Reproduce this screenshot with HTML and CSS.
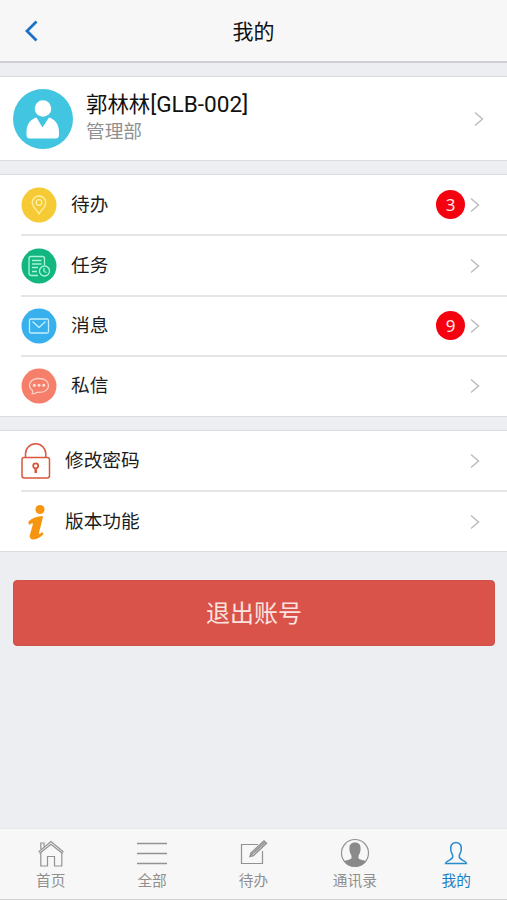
FILE: index.html
```html
<!DOCTYPE html>
<html lang="zh-CN">
<head>
    <meta charset="UTF-8">
    <meta name="viewport" content="width=device-width, initial-scale=1.0">
    <title>我的</title>
    <link rel="stylesheet" href="styles.css">
</head>
<body>
    <div class="page">
        <header class="header">
            <a class="back">
                <svg width="14" height="22" viewBox="0 0 14 22"><path d="M12.500 1.500 L3 11 L12.500 20.500"/></svg>
            </a>
            <h1 class="header-title">我的</h1>
        </header>

        <main class="content">
            <section class="group profile">
                <svg class="avatar" viewBox="0 0 60 60">
                    <circle cx="30" cy="30" r="30" fill="#42c5e1"/>
                    <circle cx="30" cy="19.5" r="8.3" fill="#fff"/>
                    <path d="M23.500 28.500 L29.500 38.500 L36 28.500 C42 30.500 46 35 46 43 V46 Q46 49.500 42.500 49.500 H17 Q13.500 49.500 13.500 46 V43 C13.500 35 17.500 30.500 23.500 28.500 Z" fill="#fff"/>
                </svg>
                <div class="profile-info">
                    <div class="profile-name">郭林林<span class="profile-code">[GLB-002]</span></div>
                    <div class="profile-dept">管理部</div>
                </div>
                <svg class="arrow" viewBox="0 0 10 16"><path d="M1 1.500 L8.500 8 L1 14.500"/></svg>
            </section>

            <section class="group">
                <div class="row">
                    <svg class="row-icon" viewBox="0 0 36 36">
                        <circle cx="18" cy="18" r="17.500" fill="#f5ca35"/>
                        <g class="line pin">
                            <path d="M18 27 C16 23 11.200 20 11.200 15.800 A6.800 6.800 0 0 1 24.800 15.800 C24.800 20 20 23 18 27 Z"/>
                            <circle cx="18" cy="15.500" r="2.800"/>
                        </g>
                    </svg>
                    <span class="row-label">待办</span>
                    <span class="badge">3</span>
                    <svg class="arrow" viewBox="0 0 10 16"><path d="M1 1.500 L8.500 8 L1 14.500"/></svg>
                </div>
                <div class="row">
                    <svg class="row-icon" viewBox="0 0 36 36">
                        <circle cx="18" cy="18" r="17.500" fill="#12b681"/>
                        <g class="line task">
                            <path d="M17 27.500 H10.500 Q8 27.500 8 25 V10.500 Q8 8.500 10 8.500 H21.500 Q23.500 8.500 23.500 10.500 V17"/>
                            <path d="M11 12.500 H20.500 M11 16 H20.500 M11 19.500 H17 M11 23.500 H16"/>
                            <circle cx="23.500" cy="23" r="5"/>
                            <path d="M23 20 V23.500 L25.500 24.500"/>
                        </g>
                    </svg>
                    <span class="row-label">任务</span>
                    <svg class="arrow" viewBox="0 0 10 16"><path d="M1 1.500 L8.500 8 L1 14.500"/></svg>
                </div>
                <div class="row">
                    <svg class="row-icon" viewBox="0 0 36 36">
                        <circle cx="18" cy="18" r="17.500" fill="#38b0ed"/>
                        <g class="line mail">
                            <rect x="8.500" y="11" width="19" height="14" rx="1.500"/>
                            <path d="M11.500 13.500 L18 19.500 L24.500 13.500"/>
                        </g>
                    </svg>
                    <span class="row-label">消息</span>
                    <span class="badge">9</span>
                    <svg class="arrow" viewBox="0 0 10 16"><path d="M1 1.500 L8.500 8 L1 14.500"/></svg>
                </div>
                <div class="row">
                    <svg class="row-icon" viewBox="0 0 36 36">
                        <circle cx="18" cy="18" r="17.500" fill="#f57f6b"/>
                        <g class="line chat">
                            <path d="M11.500 22.500 C6 18.500 8.500 10.500 18 10.500 C24 10.500 27.500 13.500 27.500 17.300 C27.500 22.500 22 25 16.500 24.200 Q14.500 25.800 11 25.800 Q12.300 24.500 11.500 22.500 Z"/>
                        </g>
                        <g fill="#ffe3da">
                            <circle cx="13.300" cy="17.300" r="1.500"/>
                            <circle cx="18" cy="17.300" r="1.500"/>
                            <circle cx="22.700" cy="17.300" r="1.500"/>
                        </g>
                    </svg>
                    <span class="row-label">私信</span>
                    <svg class="arrow" viewBox="0 0 10 16"><path d="M1 1.500 L8.500 8 L1 14.500"/></svg>
                </div>
            </section>

            <section class="group">
                <div class="row">
                    <svg class="tool-icon" viewBox="0 0 30 36" fill="none" stroke="#d9573c" stroke-width="1.500">
                        <rect x="1" y="14.500" width="27.500" height="20.500" rx="2.200"/>
                        <path d="M4.500 14.500 V11 A10 10 0 0 1 24.800 11 V14.500"/>
                        <circle cx="14.700" cy="22.800" r="2.500" stroke-width="1.800"/>
                        <path d="M14.700 25.500 V30" stroke-width="2.500"/>
                    </svg>
                    <span class="row-label">修改密码</span>
                    <svg class="arrow" viewBox="0 0 10 16"><path d="M1 1.500 L8.500 8 L1 14.500"/></svg>
                </div>
                <div class="row">
                    <svg class="tool-icon" viewBox="0 0 30 36" fill="#f79510">
                        <circle cx="19" cy="5.500" r="4.600"/>
                        <path d="M7.200 18 C11 14 16 12.300 22.200 12.300 L18 28.800 C17.600 30.500 18.800 30.200 21.300 28 L22.500 30 C19.500 33.500 15.500 35.700 12 35.500 C9 35.300 8.300 33 9 30.500 L11.800 20.500 C12.200 18.800 11 19 8.300 21 Z"/>
                    </svg>
                    <span class="row-label">版本功能</span>
                    <svg class="arrow" viewBox="0 0 10 16"><path d="M1 1.500 L8.500 8 L1 14.500"/></svg>
                </div>
            </section>

            <button class="logout">退出账号</button>
        </main>

        <nav class="tabbar">
            <a class="tab">
                <svg class="tab-icon" viewBox="0 0 30 30">
                    <path d="M2.500 14 L15 3.500 L27.500 14 M4.800 14 V28 H11.500 V18.500 H18.500 V28 H25.800 V14"/>
                    <path d="M4.800 11 V5 H8 V8.500 M3.500 15.500 L15 6.200 L26.500 15.500"/>
                </svg>
                <span>首页</span>
            </a>
            <a class="tab">
                <svg class="tab-icon" viewBox="0 0 30 30">
                    <path class="bars" d="M0 5.500 H30 M0 15.500 H30 M0 25.500 H30"/>
                </svg>
                <span>全部</span>
            </a>
            <a class="tab">
                <svg class="tab-icon" viewBox="0 0 30 30">
                    <path d="M20 6.500 H3.500 V25.500 H24.500 V13"/>
                    <path d="M12 18.500 L13 15 L26 3 L28.500 5.200 L15.500 17.500 Z M13.500 16.800 L27 4.200" stroke-width="1.400"/>
                </svg>
                <span>待办</span>
            </a>
            <a class="tab">
                <svg class="tab-icon" viewBox="0 0 30 30">
                    <circle cx="15" cy="15" r="13.500"/>
                    <path d="M15 4.500 C19.500 4.500 21 7.500 20.500 12 C20.300 15 19 16.500 18.500 18 V20 C19.500 22 24 22 26 23.500 A14 14 0 0 1 4 23.500 C6 22 10.500 22 11.500 20 V18 C11 16.500 9.700 15 9.500 12 C9 7.500 10.500 4.500 15 4.500 Z" fill="#8a8a8a" stroke="none"/>
                </svg>
                <span>通讯录</span>
            </a>
            <a class="tab active">
                <svg class="tab-icon" viewBox="0 0 30 30">
                    <path d="M15 4.500 C19.500 4.500 20.700 8 20.200 12 C19.900 15 18.200 16 18.200 18.500 C18.200 22.500 25 22 25.500 25.500 H4.500 C5 22 11.800 22.500 11.800 18.500 C11.800 16 10.100 15 9.800 12 C9.300 8 10.500 4.500 15 4.500 Z"/>
                </svg>
                <span>我的</span>
            </a>
        </nav>
    </div>
</body>
</html>
```
FILE: styles.css
```css
* {
    margin: 0;
    padding: 0;
    box-sizing: border-box;
}

body {
    font-family: Roboto, "Noto Sans CJK SC", sans-serif;
    color: #1c1c1c;
    background: #eceef2;
}

svg {
    display: block;
    flex-shrink: 0;
}

.page {
    height: 900px;
    display: flex;
    flex-direction: column;
    overflow: hidden;
}

/* 顶部导航 */
.header {
    height: 63px;
    display: grid;
    grid-template-columns: 60px 1fr 60px;
    align-items: center;
    background: #f7f7f7;
    border-bottom: 2px solid #cdcfd0;
}

.back {
    padding: 1px 0 0 24px;
}

.back path {
    fill: none;
    stroke: #1a6fc9;
    stroke-width: 2.8;
}

.header-title {
    padding-bottom: 2px;
    font-size: 21px;
    font-weight: 400;
    text-align: center;
    color: #111;
}

.content {
    flex: 1;
    padding-top: 12.5px;
}

.group {
    background: #fff;
    border-top: 1px solid #d9dbde;
    border-bottom: 1px solid #d9dbde;
    margin-bottom: 13.5px;
}

.profile {
    height: 85px;
    display: flex;
    align-items: center;
    padding: 1px 23px 0 13px;
}

.avatar {
    width: 60px;
    height: 60px;
}

.profile-info {
    flex: 1;
    margin-left: 13px;
}

.profile-name {
    font-size: 21.4px;
    line-height: 28px;
    color: #111;
}

.profile-code {
    font-size: 22.6px;
    line-height: 1;
}

.profile-dept {
    font-size: 18.7px;
    line-height: 27px;
    color: #909090;
}

.arrow {
    width: 10px;
    height: 16px;
}

.arrow path {
    fill: none;
    stroke: #bdbdbd;
    stroke-width: 1.5;
}

/* 列表 */
.row {
    height: 60.4px;
    display: flex;
    align-items: center;
    margin-left: 21px;
    padding-right: 27px;
}

.row:first-child {
    height: 59.4px;
}

.row + .row {
    border-top: 2px solid #e5e5e7;
}

.row-icon {
    width: 36px;
    height: 36px;
}

.row-label {
    flex: 1;
    margin-left: 14px;
    font-size: 18.7px;
    line-height: 28px;
}

.tool-icon {
    width: 30px;
    height: 36px;
}

.line {
    fill: none;
    stroke-width: 1.3;
    stroke-linejoin: round;
}

.pin { stroke: #fff0a8; }
.task { stroke: #a8f5d6; }
.mail { stroke: #c4f0ff; }
.chat { stroke: #ffd0c2; }

.badge {
    width: 29px;
    height: 29px;
    margin-right: 5px;
    border-radius: 50%;
    background: #f5000f;
    color: #ffe9e9;
    font-family: "Noto Sans", sans-serif;
    font-size: 17px;
    line-height: 29px;
    text-align: center;
}

.logout {
    display: block;
    width: 482px;
    height: 66px;
    margin: 28px auto 0 13px;
    padding-bottom: 3px;
    border: 1px solid #d0504a;
    border-radius: 4px;
    background: #da534a;
    color: #fbe3df;
    font-family: inherit;
    font-size: 24px;
}

/* 底部标签栏 */
.tabbar {
    height: 72px;
    display: grid;
    grid-template-columns: repeat(5, 1fr);
    background: #f7f7f7;
    border-top: 1px solid #e7e9ea;
    border-bottom: 1px solid #d0d0d0;
}

.tab {
    display: flex;
    flex-direction: column;
    align-items: center;
    padding-top: 9px;
    font-size: 14.7px;
    line-height: 22px;
    color: #8f8f8f;
}

.tab-icon {
    width: 30px;
    height: 30px;
    margin-bottom: 2px;
    fill: none;
    stroke: #929292;
    stroke-width: 1.2;
}

.tab-icon .bars {
    stroke-width: 1.7;
}

.tab.active {
    color: #1c7fc4;
}

.tab.active .tab-icon {
    stroke: #2a8cca;
    stroke-width: 1.5;
}
```
